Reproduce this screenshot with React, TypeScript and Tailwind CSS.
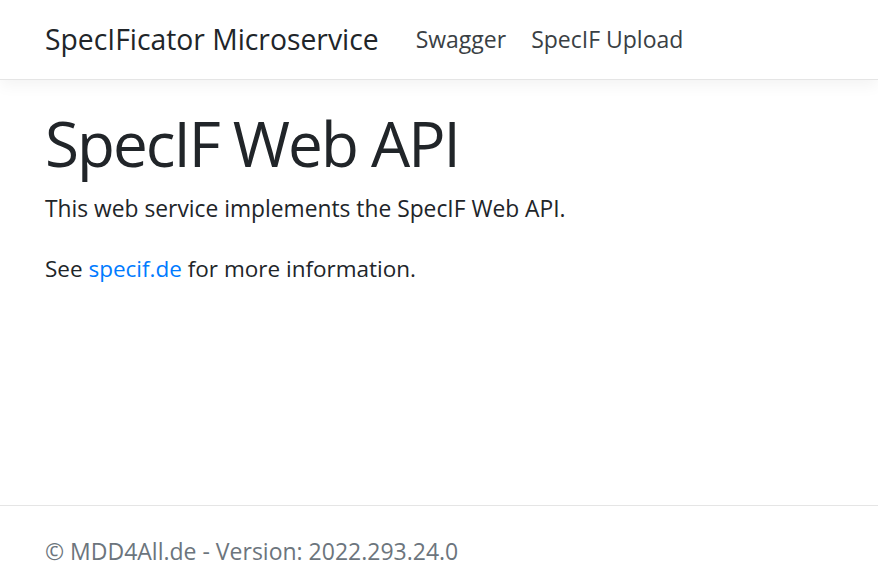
import React from 'react';

export default function App() {
  return (
    <div className="min-h-[583px] flex flex-col bg-white text-[#212529]" style={{ fontFamily: '"Open Sans", "Noto Sans", sans-serif' }}>
      <header className="h-[80px] border-b border-[#e5e5e5] shadow-[0_5px_15px_rgba(0,0,0,0.05)] flex items-center px-[45px]">
        <span className="text-[28.3px] text-[#212529] mr-[37px]">SpecIFicator Microservice</span>
        <nav className="flex gap-[25px] text-[23px] text-[#3a3f44]">
          <a>Swagger</a>
          <a>SpecIF Upload</a>
        </nav>
      </header>

      <main className="flex-1 px-[45px] pt-[26px]">
        <h1 className="text-[62px] leading-[1.2] font-normal tracking-[-2px]">SpecIF Web API</h1>
        <p className="text-[22.8px] leading-[1.5] mt-[12px]">This web service implements the SpecIF Web API.</p>
        <p className="text-[22.5px] leading-[1.5] mt-[25px]">
          See <a className="text-[#007bff]">specif.de</a> for more information.
        </p>
      </main>

      <footer className="border-t border-[#e5e5e5] px-[45px] h-[78px] pt-[28px] text-[23px] leading-[1.5] text-[#6c757d]">
        © MDD4All.de - Version: 2022.293.24.0
      </footer>
    </div>
  );
}
